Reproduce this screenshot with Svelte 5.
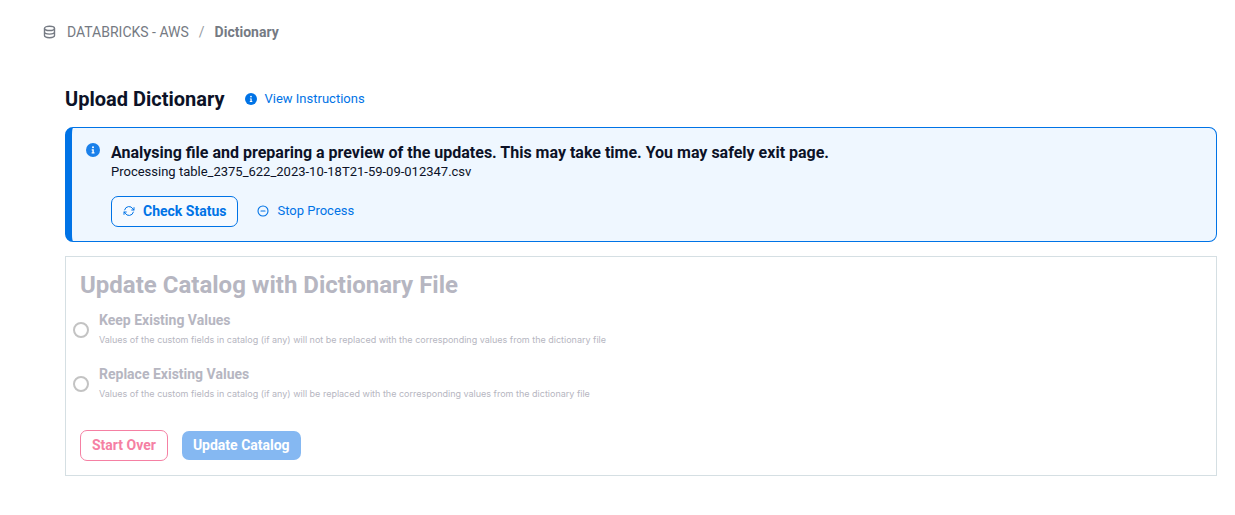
<script lang="ts">
  const file = 'table_2375_622_2023-10-18T21-59-09-012347.csv';
  const options = [
    {
      id: 'keep',
      label: 'Keep Existing Values',
      hint: 'Values of the custom fields in catalog (if any) will not be replaced with the corresponding values from the dictionary file',
    },
    {
      id: 'replace',
      label: 'Replace Existing Values',
      hint: 'Values of the custom fields in catalog (if any) will be replaced with the corresponding values from the dictionary file',
    },
  ];
</script>

{#snippet info(size: number)}
  <svg class="info" width={size} height={size} viewBox="0 0 14 14" aria-hidden="true">
    <circle cx="7" cy="7" r="7" fill="currentColor" />
    <circle cx="7" cy="4.2" r="1" fill="#fff" />
    <path d="M5.7 6.3h2.1v3h.7v1.1H5.6V9.3h.8V7.4h-.7z" fill="#fff" />
  </svg>
{/snippet}

<nav class="crumbs" aria-label="Breadcrumb">
  <svg width="13" height="14" viewBox="0 0 13 14" fill="none" stroke="currentColor" stroke-width="1.4" aria-hidden="true">
    <ellipse cx="6.5" cy="3.4" rx="5" ry="2.1" />
    <path d="M1.5 3.4v7.2c0 1.2 2.2 2.1 5 2.1s5-.9 5-2.1V3.4M1.5 7c0 1.2 2.2 2.1 5 2.1s5-.9 5-2.1" />
  </svg>
  <a href="#source">DATABRICKS - AWS</a>
  <span class="slash">/</span>
  <strong>Dictionary</strong>
</nav>

<main>
  <header>
    <h1>Upload Dictionary</h1>
    <a class="instructions" href="#instructions">{@render info(12)}View Instructions</a>
  </header>

  <section class="notice">
    {@render info(14)}
    <div>
      <h2>Analysing file and preparing a preview of the updates. This may take time. You may safely exit page.</h2>
      <p>Processing {file}</p>
      <div class="actions">
        <button class="btn outline" type="button">
          <svg width="12" height="12" viewBox="0 0 12 12" fill="none" stroke="currentColor" stroke-width="1" stroke-linecap="round" stroke-linejoin="round" aria-hidden="true">
            <path d="M1.6 4.9a4.5 4.5 0 0 1 8.3-1L10.9 5M11 2.6V5H8.7M10.4 7.1a4.5 4.5 0 0 1-8.3 1L1.1 7M1 9.4V7h2.3" />
          </svg>
          Check Status
        </button>
        <button class="btn link" type="button">
          <svg width="12" height="12" viewBox="0 0 12 12" fill="none" stroke="currentColor" stroke-width="1.1" stroke-linecap="round" aria-hidden="true">
            <circle cx="6" cy="6" r="5" />
            <path d="M4 6h4" />
          </svg>
          Stop Process
        </button>
      </div>
    </div>
  </section>

  <form class="panel">
    <h2>Update Catalog with Dictionary File</h2>
    {#each options as option (option.id)}
      <label class="option">
        <input type="radio" name="mode" value={option.id} disabled />
        <span>
          <b>{option.label}</b>
          <small>{option.hint}</small>
        </span>
      </label>
    {/each}
    <div class="buttons">
      <button class="btn danger" type="button" disabled>Start Over</button>
      <button class="btn primary" type="button" disabled>Update Catalog</button>
    </div>
  </form>
</main>

<style>
  :global(body) {
    background: #fff;
    color: #0c1227;
    font-family: Roboto, 'Liberation Sans', sans-serif;
    font-size: 14px;
  }

  h1,
  h2,
  p {
    margin: 0;
  }

  a {
    color: inherit;
    text-decoration: none;
  }

  .crumbs {
    display: flex;
    align-items: center;
    padding: 22px 43px 0;
    line-height: 20px;
    color: #757a83;
  }

  .crumbs a {
    margin-left: 11px;
  }

  .slash {
    margin: 0 10px;
    color: #989ca3;
  }

  main {
    padding: 42px 18px 40px 65px;
  }

  header {
    display: flex;
    align-items: center;
    gap: 20px;
    height: 30px;
  }

  h1 {
    font-size: 20px;
    line-height: 30px;
  }

  .info {
    flex: none;
  }

  .instructions {
    display: flex;
    align-items: center;
    gap: 8px;
    font-size: 13px;
    line-height: 20px;
    color: #0073e6;
  }

  .notice {
    display: flex;
    gap: 11px;
    margin-top: 13px;
    padding: 15px 14px 14px;
    border: 1px solid #0073e6;
    border-left-width: 7px;
    border-radius: 8px;
    background: #eff7ff;
  }

  .notice > :global(.info) {
    color: #1a80ea;
  }

  .notice h2 {
    font-size: 16px;
    line-height: 20px;
  }

  .notice p {
    font-size: 13px;
    line-height: 18px;
  }

  .actions,
  .buttons {
    display: flex;
    align-items: center;
  }

  .actions {
    gap: 8px;
    margin-top: 15px;
  }

  .btn {
    display: inline-flex;
    align-items: center;
    box-sizing: border-box;
    height: 31px;
    padding: 0 11px 2px;
    border: 1px solid transparent;
    border-radius: 7px;
    background: none;
    font: 700 14px/20px Roboto, 'Liberation Sans', sans-serif;
  }

  .outline {
    gap: 8px;
    border-color: #0073e6;
    background: #f6faff;
    color: #0073e6;
  }

  .link {
    gap: 8px;
    padding: 0 10px 2px;
    font-size: 13px;
    font-weight: 400;
    color: #0073e6;
  }

  .panel {
    margin-top: 14px;
    padding: 13px 14px 14px;
    border: 1px solid #d5dfe3;
    color: #b6b6c1;
  }

  .panel h2 {
    font-size: 24px;
    line-height: 30px;
  }

  .option {
    display: flex;
    align-items: center;
    gap: 10px;
    height: 40px;
    margin: 10px 0 14px -7px;
  }

  .option + .option {
    margin-top: 0;
  }

  .option input {
    appearance: none;
    flex: none;
    width: 16px;
    height: 16px;
    margin: 0;
    border: 2px solid #c3c3c3;
    border-radius: 50%;
  }

  .option b,
  .option small {
    display: block;
    line-height: 20px;
  }

  .option small {
    font-family: Inter, Roboto, sans-serif;
    font-size: 9px;
  }

  .buttons {
    gap: 14px;
    margin-top: 26px;
  }

  .danger {
    border-color: #f580a3;
    color: #f580a3;
  }

  .primary {
    height: 29px;
    padding: 0 10px 2px;
    background: #85b8f2;
    color: #fff;
  }
</style>
